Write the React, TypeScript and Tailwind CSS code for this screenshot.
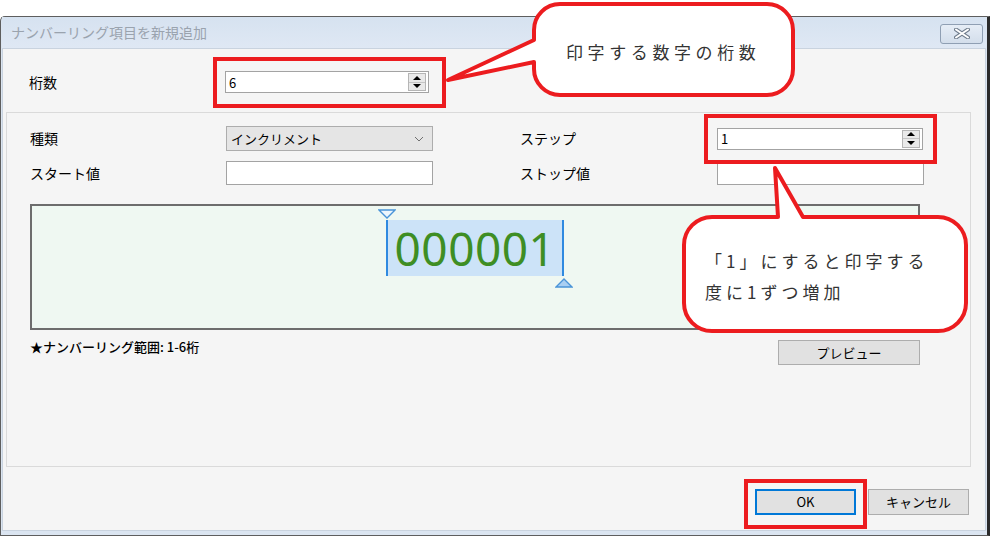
import React from 'react';

const ui = { fontFamily: '"Noto Sans CJK JP", "Noto Sans", sans-serif' };

function Spinner({ value, width }: { value: string; width: string }) {
  return (
    <div className={`flex h-[22px] ${width} items-center border border-[#a3a3a3] bg-white pl-[3px] text-[13px] text-black`}>
      <span className="leading-none">{value}</span>
      <div className="ml-auto mr-[2px] flex h-[18px] w-[18px] flex-col border border-[#b5b5b5] bg-[#e9e9e9]">
        <div className="flex flex-1 items-center justify-center border-b border-[#c5c5c5]">
          <div className="h-0 w-0 border-x-[4px] border-b-[4px] border-x-transparent border-b-black" />
        </div>
        <div className="flex flex-1 items-center justify-center">
          <div className="h-0 w-0 border-x-[4px] border-t-[4px] border-x-transparent border-t-black" />
        </div>
      </div>
    </div>
  );
}

function Callouts() {
  return (
    <>
      <svg className="pointer-events-none absolute inset-0" width="991" height="537" viewBox="0 0 991 537">
        <path
          d="M560 4 H767 A26 26 0 0 1 793 30 V69 A26 26 0 0 1 767 95 H560 A26 26 0 0 1 534 69 V62 L448 80 L534 40 V30 A26 26 0 0 1 560 4 Z"
          fill="#ffffff"
          stroke="#ec1c1f"
          strokeWidth="4"
          strokeLinejoin="round"
        />
        <path
          d="M712 217 H778 L775 168 L803 217 H938 A28 28 0 0 1 966 245 V303 A28 28 0 0 1 938 331 H712 A28 28 0 0 1 684 303 V245 A28 28 0 0 1 712 217 Z"
          fill="#ffffff"
          stroke="#ec1c1f"
          strokeWidth="4"
          strokeLinejoin="round"
        />
      </svg>
      <div className="absolute left-[566px] top-[40px] text-[17px] leading-[24px] tracking-[4.6px] text-[#333]" style={ui}>
        印字する数字の桁数
      </div>
      <div className="absolute left-[705px] top-[245px] text-[17px] leading-[31px] tracking-[4px] text-[#333]" style={ui}>
        <div>「1」にすると印字する</div>
        <div>度に1ずつ増加</div>
      </div>
      {/* red highlight frames */}
      <div className="pointer-events-none absolute left-[213px] top-[57px] h-[51px] w-[233px] border-4 border-[#ec1c1f]" />
      <div className="pointer-events-none absolute left-[704px] top-[114px] h-[50px] w-[233px] border-4 border-[#ec1c1f]" />
      <div className="pointer-events-none absolute left-[744px] top-[479px] h-[50px] w-[123px] border-4 border-[#ec1c1f]" />
    </>
  );
}

export default function App() {
  return (
    <div className="relative h-[537px] w-[991px] overflow-hidden bg-white" style={ui}>
      <div className="mt-[16px] flex h-[520px] w-[990px] flex-col rounded-tl-[5px] border border-r-[3px] border-[#5e5e5e] border-r-[#2a2a2a] bg-[#dbe5f1] px-[1px] pb-[4px]">
        {/* title bar */}
        <div className="flex h-[31px] shrink-0 items-center bg-gradient-to-b from-[#d6e2f0] to-[#dfe8f4] pl-[9px] pr-[3px]">
          <span className="text-[14px] text-[#9aa3ae]">ナンバーリング項目を新規追加</span>
          <div className="ml-auto mt-[2px] flex h-[20px] w-[43px] items-center justify-center rounded-[3px] border border-[#8f9fb3] bg-gradient-to-b from-[#e6edf6] to-[#d3deeb]">
            <svg width="16" height="11" viewBox="0 0 16 11">
              <path d="M2 1.5 L14 9.5 M14 1.5 L2 9.5" stroke="#6f7c8c" strokeWidth="4" strokeLinecap="round" />
              <path d="M2 1.5 L14 9.5 M14 1.5 L2 9.5" stroke="#ffffff" strokeWidth="2" strokeLinecap="round" />
            </svg>
          </div>
        </div>

        {/* client area */}
        <div className="flex flex-1 flex-col border border-[#c9d3df] bg-[#f5f5f5] text-[14px] text-black">
          <div className="flex h-[63px] shrink-0 items-start pl-[26px] pt-[22px]">
            <span className="w-[196px] leading-[22px]">桁数</span>
            <Spinner value="6" width="w-[204px]" />
          </div>

          <div className="ml-[3px] h-[355px] w-[965px] border border-[#dadada] pl-[23px] pt-[13px]">
            <div className="grid grid-cols-[196px_207px_87px_197px_207px] items-center gap-y-[10px]">
              <span>種類</span>
              <div className="flex h-[25px] items-center border border-[#adadad] bg-[#e5e5e5] pl-[4px] pr-[8px] text-[13px]">
                <span>インクリメント</span>
                <svg className="ml-auto" width="10" height="6" viewBox="0 0 10 6">
                  <path d="M1 1 L5 5 L9 1" fill="none" stroke="#707070" strokeWidth="1" />
                </svg>
              </div>
              <span />
              <span>ステップ</span>
              <Spinner value="1" width="w-[206px]" />

              <span>スタート値</span>
              <div className="h-[24px] border border-[#a3a3a3] bg-white" />
              <span />
              <span>ストップ値</span>
              <div className="h-[24px] w-[207px] border border-[#a3a3a3] bg-white" />
            </div>

            {/* preview */}
            <div className="mt-[19px] flex h-[126px] w-[890px] justify-center border-2 border-[#6d6d6d] bg-[#eff8f2] pt-[14px]">
              <div className="relative h-[56px] w-[178px]">
                <div className="flex h-full w-full items-center justify-center border-x-2 border-[#2f8ae0] bg-[#cce3f8]">
                  <span
                    className="text-[46px] leading-none tracking-[0.5px] text-[#3e8e24]"
                    style={{ fontFamily: '"Noto Sans", sans-serif' }}
                  >
                    000001
                  </span>
                </div>
                <svg className="absolute -top-[11px] -left-[8px]" width="18" height="10" viewBox="0 0 18 10">
                  <path d="M1 1 H17 L9 9 Z" fill="#eef6fd" stroke="#4a94d8" strokeWidth="1.3" />
                </svg>
                <svg className="absolute -bottom-[12px] -right-[9px]" width="18" height="10" viewBox="0 0 18 10">
                  <path d="M1 9 H17 L9 1 Z" fill="#a9cff2" stroke="#4a94d8" strokeWidth="1.3" />
                </svg>
              </div>
            </div>

            <div className="flex w-[890px] items-start justify-between">
              <span className="mt-[8px] text-[13px] font-medium leading-[18px]">★ナンバーリング範囲: 1-6桁</span>
              <button className="mt-[10px] h-[25px] w-[142px] border border-[#adadad] bg-[#e1e1e1] text-[13px]">プレビュー</button>
            </div>
          </div>

          <div className="flex flex-1 items-start justify-end gap-[12px] pr-[16px] pt-[22px]">
            <button className="h-[26px] w-[101px] border-2 border-[#0078d7] bg-[#e1e1e1] text-[13px]">OK</button>
            <button className="h-[26px] w-[101px] border border-[#adadad] bg-[#e1e1e1] text-[13px]">キャンセル</button>
          </div>
        </div>
      </div>

      <Callouts />
    </div>
  );
}
